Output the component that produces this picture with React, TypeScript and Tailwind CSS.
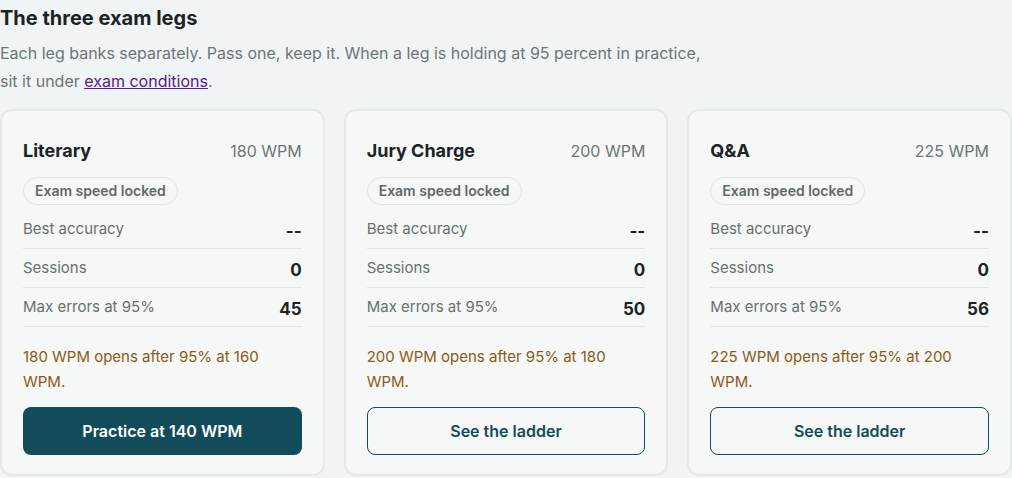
const legs = [
  {
    name: "Literary",
    wpm: 180,
    maxErrors: 45,
    note: "180 WPM opens after 95% at 160 WPM.",
    action: "Practice at 140 WPM",
    primary: true,
  },
  {
    name: "Jury Charge",
    wpm: 200,
    maxErrors: 50,
    note: "200 WPM opens after 95% at 180 WPM.",
    action: "See the ladder",
    primary: false,
  },
  {
    name: "Q&A",
    wpm: 225,
    maxErrors: 56,
    note: "225 WPM opens after 95% at 200 WPM.",
    action: "See the ladder",
    primary: false,
  },
];

type Leg = (typeof legs)[number];

function StatRow({ label, value }: { label: string; value: string }) {
  return (
    <div className="flex h-[39px] items-center justify-between border-b border-[#e1e6e6]">
      <span className="text-[15px] leading-6 text-[#66706f]">{label}</span>
      <span className="pt-[3px] text-[17px] leading-6 font-bold text-[#1c2525]">{value}</span>
    </div>
  );
}

function LegCard({ leg }: { leg: Leg }) {
  return (
    <div className="flex flex-col rounded-[12px] border-2 border-[#e3e8e8] bg-[#f6f8f8] px-[21px] pt-[26px] pb-[19px]">
      <div className="flex items-center justify-between">
        <h3 className="text-[18px] leading-7 font-bold text-[#1b2424]">{leg.name}</h3>
        <span className="text-base leading-7 text-[#6b7575]">{leg.wpm} WPM</span>
      </div>

      <div className="mt-3">
        <span className="inline-flex h-7 items-center rounded-full border border-[#dfe4e4] px-[11px] text-sm font-semibold text-[#5f6969]">
          Exam speed locked
        </span>
      </div>

      <div className="mt-[5px]">
        <StatRow label="Best accuracy" value="--" />
        <StatRow label="Sessions" value="0" />
        <StatRow label="Max errors at 95%" value={String(leg.maxErrors)} />
      </div>

      <p className="mt-[17px] text-[15px] leading-[25px] text-[#8b5a14]">{leg.note}</p>

      <button
        className={
          leg.primary
            ? "mt-[13px] h-12 w-full rounded-lg bg-[#124c5a] text-base font-semibold text-white"
            : "mt-[13px] h-12 w-full rounded-lg border border-[#124c5a] bg-transparent text-base font-semibold text-[#124c5a]"
        }
      >
        {leg.action}
      </button>
    </div>
  );
}

export default function App() {
  return (
    <div
      className="min-h-screen bg-[#f1f4f5] pt-[4px]"
      style={{ fontFamily: "Inter, 'Noto Sans', sans-serif" }}
    >
      <h2 className="text-[20px] leading-7 font-bold text-[#1b2424]">The three exam legs</h2>
      <p className="mt-[7px] max-w-[710px] text-base leading-7 text-[#6b7676]">
        Each leg banks separately. Pass one, keep it. When a leg is holding at 95 percent in practice,
        sit it under{" "}
        <a href="#" className="text-[#551a8b] underline">
          exam conditions
        </a>
        .
      </p>

      <div className="mt-[14px] grid grid-cols-3 gap-[19px]">
        {legs.map((leg) => (
          <LegCard key={leg.name} leg={leg} />
        ))}
      </div>
    </div>
  );
}
